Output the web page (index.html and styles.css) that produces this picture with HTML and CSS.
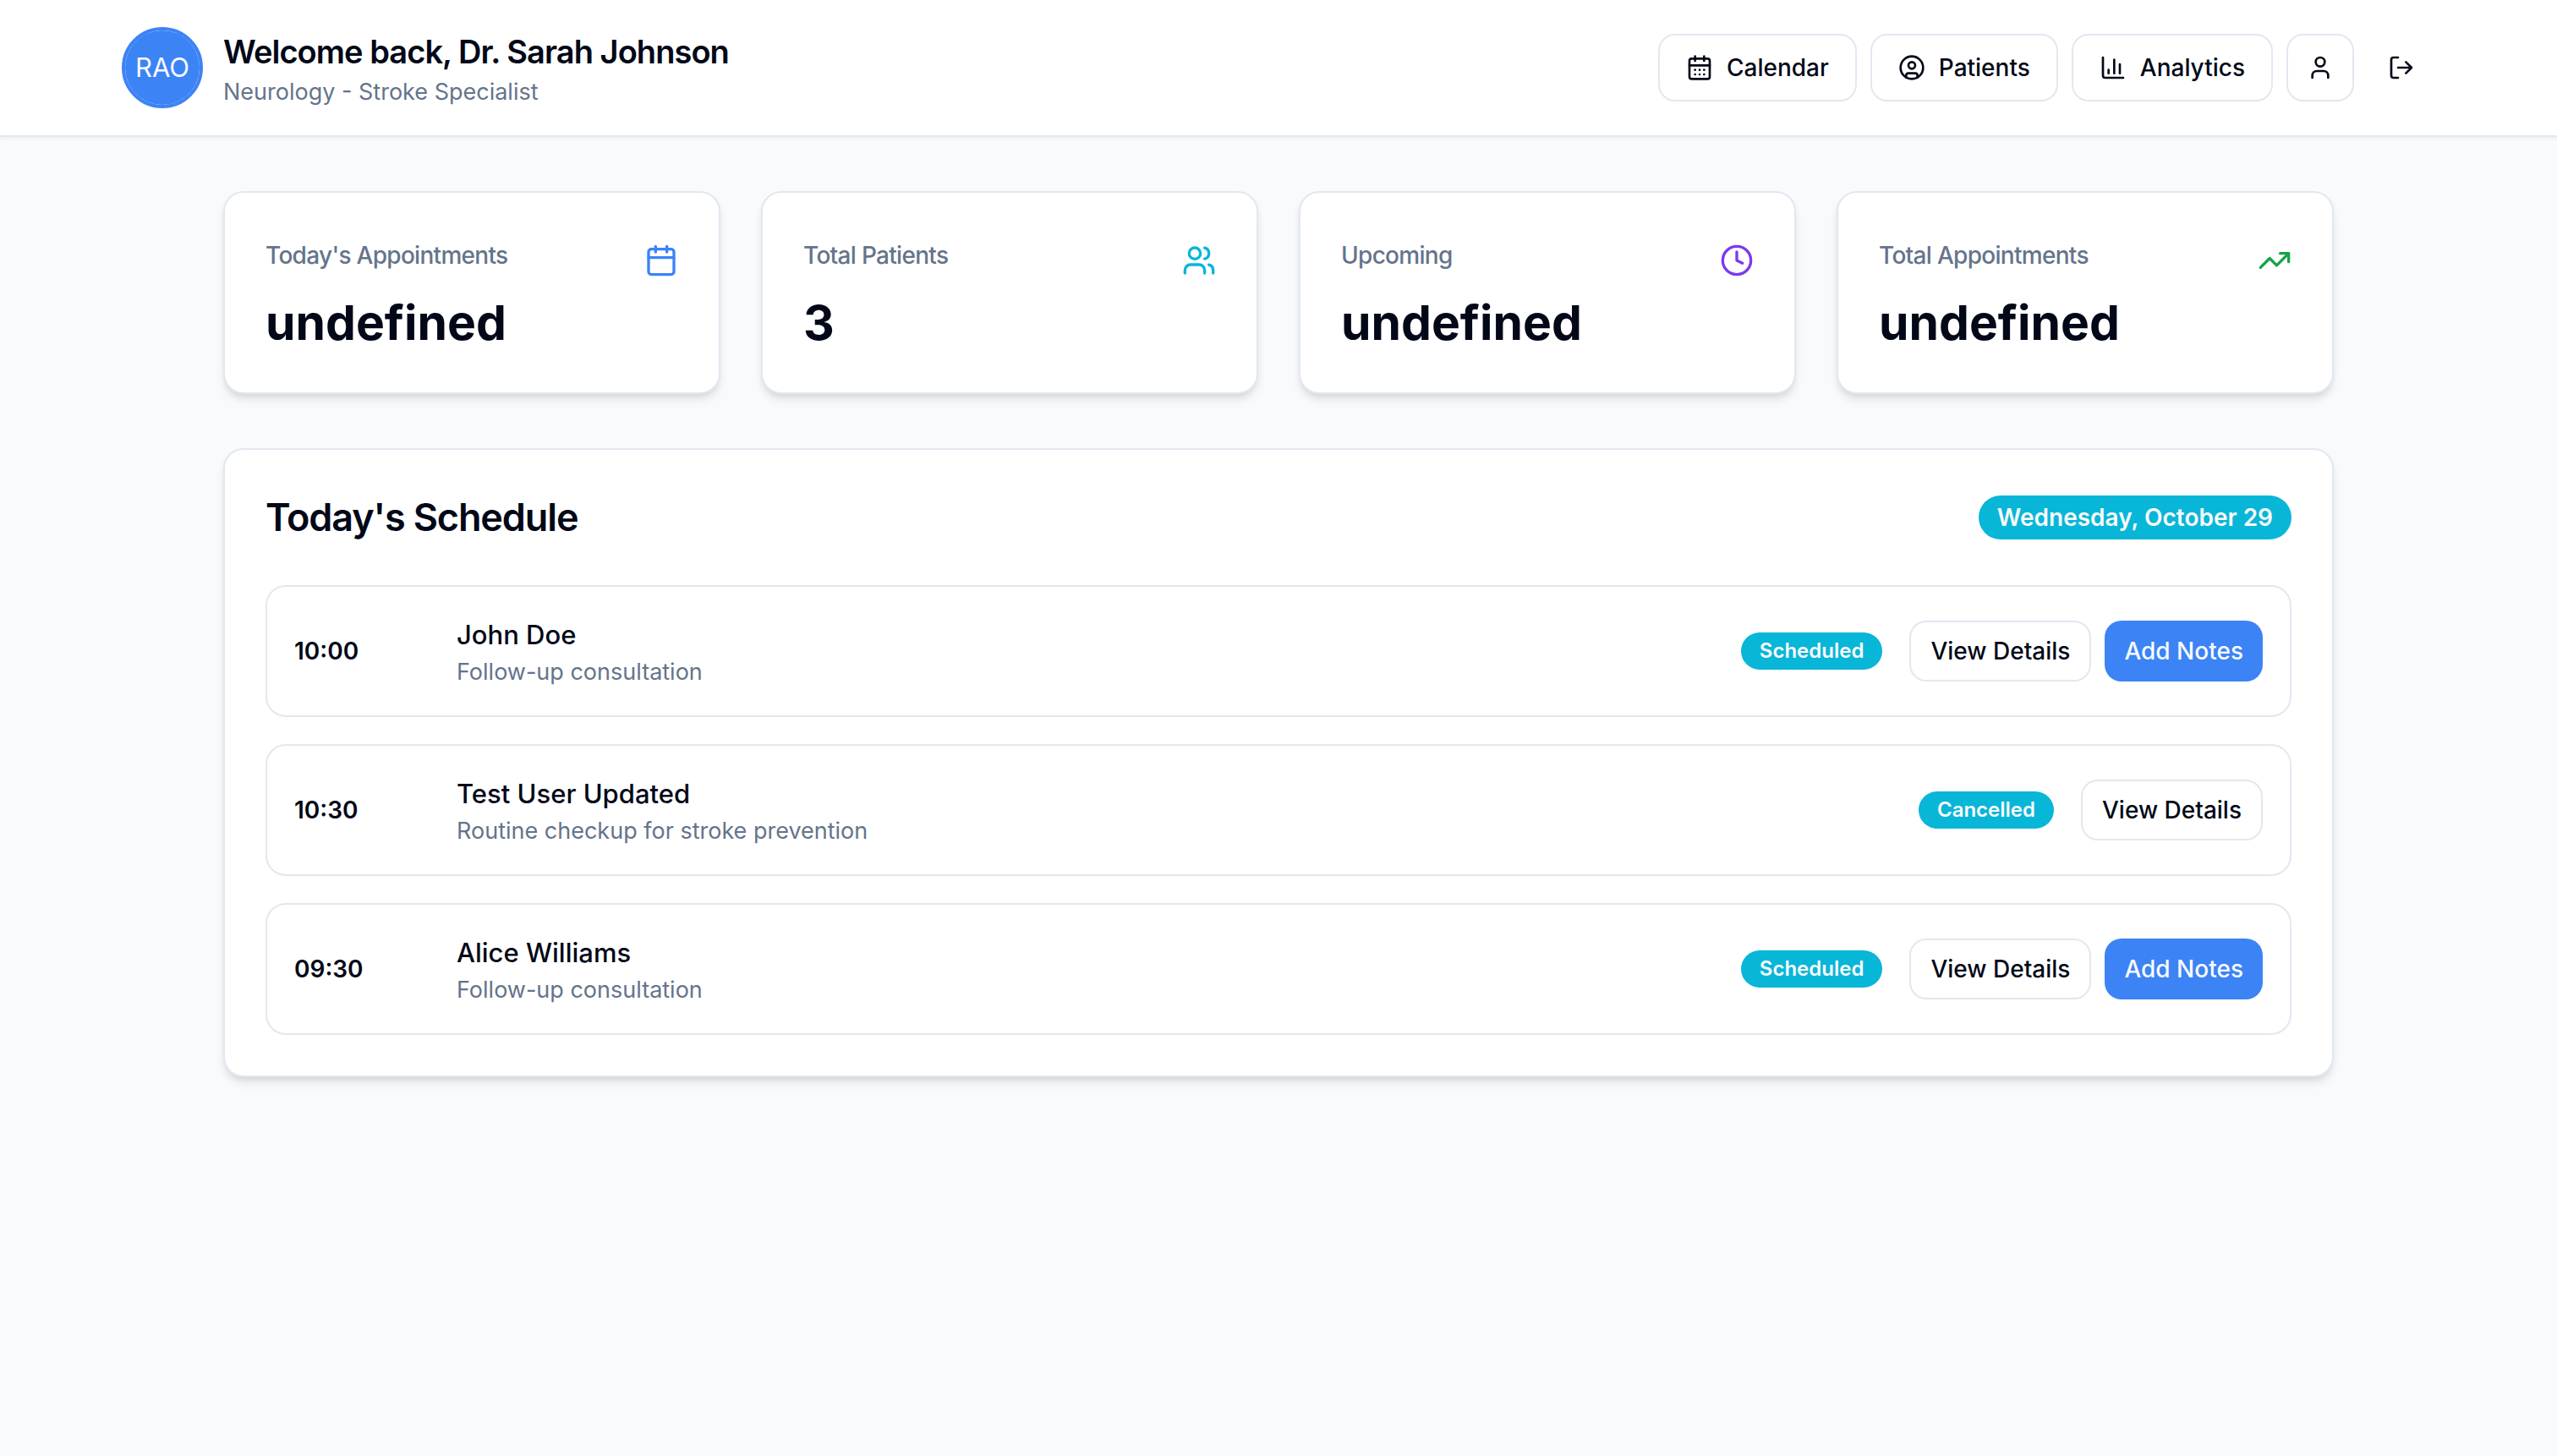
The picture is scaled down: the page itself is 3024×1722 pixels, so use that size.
FILE: index.html
```html
<!DOCTYPE html>
<html lang="en">
<head>
  <meta charset="utf-8">
  <meta name="viewport" content="width=device-width, initial-scale=1">
  <title>Doctor Dashboard</title>
  <link rel="stylesheet" href="styles.css">
</head>
<body>
  <header class="topbar">
    <div class="topbar-inner">
      <div class="profile">
        <div class="avatar"><span class="avatar-fallback">RAO</span></div>
        <div>
          <h1 class="profile-title">Welcome back, Dr. Sarah Johnson</h1>
          <p class="profile-role">Neurology - Stroke Specialist</p>
        </div>
      </div>
      <nav class="actions" aria-label="Main">
        <button class="btn btn-outline" type="button">
          <svg class="icon" viewBox="0 0 24 24" aria-hidden="true"><path d="M8 2v4M16 2v4"/><rect width="18" height="18" x="3" y="4" rx="2"/><path d="M3 10h18M8 14h.01M12 14h.01M16 14h.01M8 18h.01M12 18h.01M16 18h.01"/></svg>
          Calendar
        </button>
        <button class="btn btn-outline" type="button">
          <svg class="icon" viewBox="0 0 24 24" aria-hidden="true"><circle cx="12" cy="12" r="10"/><circle cx="12" cy="10" r="3"/><path d="M7 20.662V19a2 2 0 0 1 2-2h6a2 2 0 0 1 2 2v1.662"/></svg>
          Patients
        </button>
        <button class="btn btn-outline" type="button">
          <svg class="icon" viewBox="0 0 24 24" aria-hidden="true"><path d="M3 3v16a2 2 0 0 0 2 2h16"/><path d="M18 17V9M13 17V5M8 17v-3"/></svg>
          Analytics
        </button>
        <button class="btn btn-outline btn-icon" type="button" aria-label="Profile">
          <svg class="icon" viewBox="0 0 24 24" aria-hidden="true"><path d="M19 21v-2a4 4 0 0 0-4-4H9a4 4 0 0 0-4 4v2"/><circle cx="12" cy="7" r="4"/></svg>
        </button>
        <button class="btn btn-icon" type="button" aria-label="Log out">
          <svg class="icon" viewBox="0 0 24 24" aria-hidden="true"><path d="M9 21H5a2 2 0 0 1-2-2V5a2 2 0 0 1 2-2h4"/><path d="m16 17 5-5-5-5M21 12H9"/></svg>
        </button>
      </nav>
    </div>
  </header>

  <main class="content">
    <section class="stats" aria-label="Statistics">
      <article class="card stat">
        <div>
          <h2 class="stat-label">Today's Appointments</h2>
          <p class="stat-value">undefined</p>
        </div>
        <svg class="icon stat-icon blue" viewBox="0 0 24 24" aria-hidden="true"><path d="M8 2v4M16 2v4"/><rect width="18" height="18" x="3" y="4" rx="2"/><path d="M3 10h18"/></svg>
      </article>
      <article class="card stat">
        <div>
          <h2 class="stat-label">Total Patients</h2>
          <p class="stat-value">3</p>
        </div>
        <svg class="icon stat-icon cyan" viewBox="0 0 24 24" aria-hidden="true"><path d="M16 21v-2a4 4 0 0 0-4-4H6a4 4 0 0 0-4 4v2"/><circle cx="9" cy="7" r="4"/><path d="M22 21v-2a4 4 0 0 0-3-3.87M16 3.13a4 4 0 0 1 0 7.75"/></svg>
      </article>
      <article class="card stat">
        <div>
          <h2 class="stat-label">Upcoming</h2>
          <p class="stat-value">undefined</p>
        </div>
        <svg class="icon stat-icon violet" viewBox="0 0 24 24" aria-hidden="true"><circle cx="12" cy="12" r="10"/><path d="M12 6v6l4 2"/></svg>
      </article>
      <article class="card stat">
        <div>
          <h2 class="stat-label">Total Appointments</h2>
          <p class="stat-value">undefined</p>
        </div>
        <svg class="icon stat-icon green" viewBox="0 0 24 24" aria-hidden="true"><path d="M22 7l-8.5 8.5-5-5L2 17"/><path d="M16 7h6v6"/></svg>
      </article>
    </section>

    <section class="card schedule">
      <div class="schedule-head">
        <h2 class="schedule-title">Today's Schedule</h2>
        <span class="badge badge-date">Wednesday, October 29</span>
      </div>
      <ul class="appointments">
        <li class="appointment">
          <time class="time">10:00</time>
          <div class="patient">
            <h3 class="patient-name">John Doe</h3>
            <p class="patient-note">Follow-up consultation</p>
          </div>
          <span class="badge">Scheduled</span>
          <div class="appointment-actions">
            <button class="btn btn-small btn-outline" type="button">View Details</button>
            <button class="btn btn-small btn-primary" type="button">Add Notes</button>
          </div>
        </li>
        <li class="appointment">
          <time class="time">10:30</time>
          <div class="patient">
            <h3 class="patient-name">Test User Updated</h3>
            <p class="patient-note">Routine checkup for stroke prevention</p>
          </div>
          <span class="badge">Cancelled</span>
          <div class="appointment-actions">
            <button class="btn btn-small btn-outline" type="button">View Details</button>
          </div>
        </li>
        <li class="appointment">
          <time class="time">09:30</time>
          <div class="patient">
            <h3 class="patient-name">Alice Williams</h3>
            <p class="patient-note">Follow-up consultation</p>
          </div>
          <span class="badge">Scheduled</span>
          <div class="appointment-actions">
            <button class="btn btn-small btn-outline" type="button">View Details</button>
            <button class="btn btn-small btn-primary" type="button">Add Notes</button>
          </div>
        </li>
      </ul>
    </section>
  </main>
</body>
</html>
```
FILE: styles.css
```css
:root {
  --background: #f8fafc;
  --surface: #ffffff;
  --text: #020817;
  --muted: #64748b;
  --border: #e2e8f0;
  --primary: #3c83f6;
  --secondary: #08b6d8;
}

* {
  box-sizing: border-box;
  margin: 0;
  padding: 0;
}

body {
  min-height: 100vh;
  background: var(--background);
  color: var(--text);
  font-family: Inter, "Liberation Sans", sans-serif;
  font-size: 31px;
  line-height: 50px;
}

/* Header */
.topbar {
  background: var(--surface);
  border-bottom: 2px solid var(--border);
  box-shadow: 0 2px 4px rgba(0, 0, 0, 0.05);
}

.topbar-inner {
  display: flex;
  align-items: center;
  justify-content: space-between;
  max-width: 2800px;
  margin: 0 auto;
  padding: 32px;
}

.profile {
  display: flex;
  align-items: center;
  gap: 24px;
}

.avatar {
  display: flex;
  width: 96px;
  height: 96px;
  border: 4px solid var(--primary);
  border-radius: 50%;
}

.avatar-fallback {
  flex: 1;
  display: flex;
  align-items: center;
  justify-content: center;
  border-radius: 50%;
  background: var(--primary);
  color: #f8fafc;
}

.profile-title {
  font-size: 38px;
  font-weight: 600;
  line-height: 58px;
  letter-spacing: -0.025em;
}

.profile-role {
  color: var(--muted);
  font-size: 27px;
  line-height: 38px;
}

.actions {
  display: flex;
  align-items: center;
  gap: 16px;
}

/* Buttons and icons */
.btn {
  display: inline-flex;
  align-items: center;
  justify-content: center;
  gap: 16px;
  height: 80px;
  padding: 0 31px;
  border: 0;
  border-radius: 20px;
  background: transparent;
  color: var(--text);
  font-family: inherit;
  font-size: 28px;
  font-weight: 500;
  line-height: 40px;
  white-space: nowrap;
  cursor: pointer;
}

.btn-outline {
  border: 2px solid var(--border);
  background: var(--surface);
}

.btn-icon {
  width: 80px;
  padding: 0;
}

.btn-small {
  height: 72px;
  padding: 0 23px;
}

.btn-primary {
  background: var(--primary);
  color: #f8fafc;
}

.icon {
  flex: none;
  width: 32px;
  height: 32px;
  fill: none;
  stroke: currentColor;
  stroke-width: 2;
  stroke-linecap: round;
  stroke-linejoin: round;
}

/* Page content */
.content {
  display: grid;
  gap: 64px;
  max-width: 2560px;
  margin: 0 auto;
  padding: 64px 32px;
}

.card {
  padding: 48px;
  border: 2px solid var(--border);
  border-radius: 24px;
  background: var(--surface);
  box-shadow: 0 8px 12px -2px rgba(0, 0, 0, 0.1), 0 4px 8px -4px rgba(0, 0, 0, 0.1);
}

.stats {
  display: grid;
  grid-template-columns: repeat(4, 1fr);
  gap: 48px;
}

.stat {
  display: flex;
  align-items: flex-start;
  justify-content: space-between;
}

.stat-label {
  padding-top: 6px;
  color: var(--muted);
  font-size: 28px;
  font-weight: 500;
  line-height: 40px;
  letter-spacing: -0.025em;
}

.stat-value {
  padding-top: 26px;
  font-size: 57px;
  font-weight: 700;
  line-height: 68px;
}

.stat-icon {
  width: 40px;
  height: 40px;
  margin-top: 12px;
}

.blue { color: var(--primary); }
.cyan { color: var(--secondary); }
.violet { color: #7c3aed; }
.green { color: #16a34a; }

/* Schedule */
.schedule-head {
  display: flex;
  align-items: center;
  justify-content: space-between;
  margin-bottom: 48px;
}

.schedule-title {
  font-size: 45px;
  font-weight: 600;
  line-height: 64px;
  letter-spacing: -0.025em;
}

.badge {
  padding: 6px 22px;
  border-radius: 32px;
  background: var(--secondary);
  color: #f8fafc;
  font-size: 24px;
  font-weight: 600;
  line-height: 32px;
}

.badge-date {
  font-size: 28px;
  line-height: 40px;
}

.appointments {
  display: grid;
  gap: 32px;
  list-style: none;
}

.appointment {
  display: flex;
  align-items: center;
  gap: 32px;
  padding: 32px;
  border: 2px solid var(--border);
  border-radius: 24px;
}

.time {
  width: 160px;
  font-size: 28px;
  font-weight: 600;
  line-height: 40px;
}

.patient {
  flex: 1;
}

.patient-name {
  font-size: 31px;
  font-weight: 500;
  line-height: 50px;
}

.patient-note {
  color: var(--muted);
  font-size: 27px;
  line-height: 38px;
}

.appointment-actions {
  display: flex;
  gap: 16px;
}
```
